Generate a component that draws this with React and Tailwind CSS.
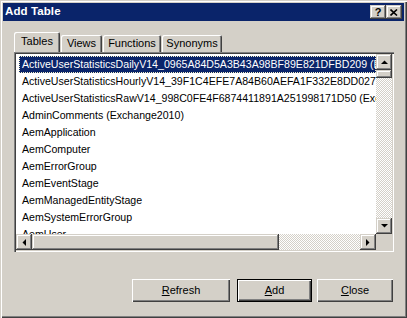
import React from 'react';

const rows = [
  'ActiveUserStatisticsDailyV14_0965A84D5A3B43A98BF89E821DFBD209 (Exchange2010)',
  'ActiveUserStatisticsHourlyV14_39F1C4EFE7A84B60AEFA1F332E8DD027 (Exchange2010)',
  'ActiveUserStatisticsRawV14_998C0FE4F6874411891A251998171D50 (Exchange2010)',
  'AdminComments (Exchange2010)',
  'AemApplication',
  'AemComputer',
  'AemErrorGroup',
  'AemEventStage',
  'AemManagedEntityStage',
  'AemSystemErrorGroup',
  'AemUser',
];

const tabs = [
  { label: 'Tables', w: 'w-[46px]', active: true },
  { label: 'Views', w: 'w-[41px]' },
  { label: 'Functions', w: 'w-[58px]' },
  { label: 'Synonyms', w: 'w-[60px]' },
];

const raised =
  'bg-[#d4d0c8] shadow-[inset_-1px_-1px_#404040,inset_1px_1px_#d4d0c8,inset_-2px_-2px_#808080,inset_2px_2px_#fff]';
const checker =
  'bg-[image:repeating-conic-gradient(#d4d0c8_0_25%,#fff_0_50%)] bg-[length:2px_2px]';

function Arrow({ dir }) {
  const pts = {
    up: '0,4 7,4 3.5,0.5',
    down: '0,0 7,0 3.5,3.5',
    left: '4,0 4,7 0.5,3.5',
    right: '0,0 0,7 3.5,3.5',
  }[dir];
  const vertical = dir === 'up' || dir === 'down';
  return (
    <svg width={vertical ? 7 : 4} height={vertical ? 4 : 7} viewBox={vertical ? '0 0 7 4' : '0 0 4 7'}>
      <polygon points={pts} fill="#000" />
    </svg>
  );
}

function PushButton({ children, width, isDefault }) {
  return (
    <div
      className={`${width} h-[23px] flex items-center justify-center bg-[#d4d0c8] text-black ${
        isDefault
          ? 'border border-black shadow-[inset_1px_1px_#fff,inset_-1px_-1px_#404040,inset_-2px_-2px_#808080]'
          : 'shadow-[inset_1px_1px_#fff,inset_-1px_-1px_#404040,inset_-2px_-2px_#808080]'
      }`}
    >
      {children}
    </div>
  );
}

export default function App() {
  return (
    <div
      className="w-[407px] h-[318px] p-[3px] bg-[#d4d0c8] flex flex-col shadow-[inset_1px_1px_#d4d0c8,inset_2px_2px_#fff,inset_-1px_-1px_#404040,inset_-2px_-2px_#808080] text-[11px] text-black select-none"
      style={{ fontFamily: '"Liberation Sans", Arial, sans-serif' }}
    >
      {/* title bar */}
      <div className="h-[18px] bg-[#0a246a] flex items-center justify-between pl-[2px] pr-[2px]">
        <span className="text-white font-bold text-[11.5px] tracking-[0.1px]">Add Table</span>
        <div className="flex">
          <div className={`w-[16px] h-[14px] flex items-center justify-center ${raised}`}>
            <span className="font-bold text-[11px] leading-none mt-[1px]">?</span>
          </div>
          <div className={`w-[16px] h-[14px] ml-[0px] flex items-center justify-center ${raised}`}>
            <svg width="8" height="7" viewBox="0 0 8 7">
              <path d="M0.5 0.5 L7 6.5 M7 0.5 L0.5 6.5" stroke="#000" strokeWidth="1.6" />
            </svg>
          </div>
        </div>
      </div>

      <div className="flex flex-col px-[11px] pt-[11px]">
        {/* tabs */}
        <div className="flex items-end h-[20px]">
          {tabs.map((t) => (
            <div
              key={t.label}
              className={`${t.w} ${
                t.active ? 'h-[20px] pb-[2px]' : 'h-[17px] ml-[1px]'
              } flex items-center justify-center rounded-t-[2px] bg-[#d4d0c8] shadow-[inset_1px_1px_#fff,inset_-1px_0_#404040,inset_-2px_0_#808080]`}
            >
              <span className="text-[11px]">{t.label}</span>
            </div>
          ))}
        </div>

        {/* list box */}
        <div className="w-[380px] h-[200px] p-[2px] bg-white shadow-[inset_1px_1px_#808080,inset_2px_2px_#404040,inset_-1px_-1px_#fff,inset_-2px_-2px_#d4d0c8] flex flex-col">
          <div className="flex h-[180px]">
            <div className="w-[360px] h-[180px] overflow-hidden pt-[2px] pl-[3px]">
              {rows.map((r, i) => (
                <div
                  key={r}
                  className={`h-[17px] flex items-center whitespace-nowrap pl-[3px] text-[10.6px] ${
                    i === 0
                      ? 'bg-[#0a246a] text-white outline outline-1 outline-dotted outline-[#f5f0c8] -outline-offset-1'
                      : ''
                  }`}
                >
                  {r}
                </div>
              ))}
            </div>
            <div className="w-[16px] h-[180px] flex flex-col">
              <div className={`h-[16px] flex items-center justify-center ${raised}`}>
                <Arrow dir="up" />
              </div>
              <div className={`h-[8px] ${raised}`} />
              <div className={`flex-1 ${checker}`} />
              <div className={`h-[16px] flex items-center justify-center ${raised}`}>
                <Arrow dir="down" />
              </div>
            </div>
          </div>
          <div className="flex h-[16px]">
            <div className="w-[360px] flex">
              <div className={`w-[16px] flex items-center justify-center ${raised}`}>
                <Arrow dir="left" />
              </div>
              <div className={`w-[247px] ${raised}`} />
              <div className={`flex-1 ${checker}`} />
              <div className={`w-[16px] flex items-center justify-center ${raised}`}>
                <Arrow dir="right" />
              </div>
            </div>
            <div className="w-[16px] bg-[#d4d0c8]" />
          </div>
        </div>

        {/* buttons */}
        <div className="flex justify-end mt-[27px]">
          <PushButton width="w-[98px]">
            <span>
              <span className="underline">R</span>efresh
            </span>
          </PushButton>
          <div className="ml-[7px]">
            <PushButton width="w-[75px]" isDefault>
              <span>
                <span className="underline">A</span>dd
              </span>
            </PushButton>
          </div>
          <div className="ml-[5px]">
            <PushButton width="w-[76px]">
              <span>
                <span className="underline">C</span>lose
              </span>
            </PushButton>
          </div>
        </div>
      </div>
    </div>
  );
}
